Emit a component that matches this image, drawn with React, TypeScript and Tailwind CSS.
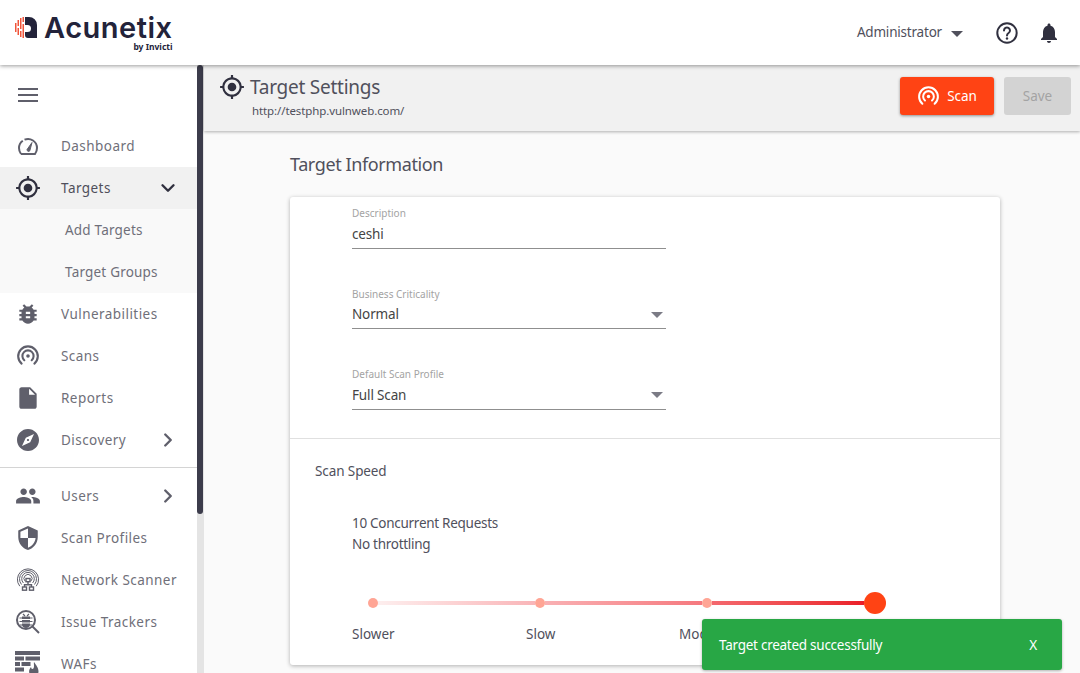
import React from "react";
import { ChevronDown, ChevronRight } from "lucide-react";

const P = ({ d, size = 26, className = "" }: { d: string; size?: number; className?: string }) => (
  <svg width={size} height={size} viewBox="0 0 24 24" fill="currentColor" className={className}><path d={d} /></svg>
);

const TargetIcon = ({ size = 26 }: { size?: number }) => (
  <P size={size} d="M12 8c-2.21 0-4 1.79-4 4s1.79 4 4 4 4-1.79 4-4-1.79-4-4-4zm8.94 3A8.994 8.994 0 0 0 13 3.06V1h-2v2.06A8.994 8.994 0 0 0 3.06 11H1v2h2.06A8.994 8.994 0 0 0 11 20.94V23h2v-2.06A8.994 8.994 0 0 0 20.94 13H23v-2h-2.06zM12 19c-3.87 0-7-3.13-7-7s3.13-7 7-7 7 3.13 7 7-3.13 7-7 7z" />
);

const ScanIcon = ({ size = 24 }: { size?: number }) => (
  <svg width={size} height={size} viewBox="0 0 24 24" fill="none" stroke="currentColor" strokeWidth="2.1" strokeLinecap="round">
    <circle cx="12" cy="12" r="1.8" fill="currentColor" stroke="none" />
    <path d="M8.3 16.2a5.6 5.6 0 1 1 7.4 0" />
    <path d="M5.6 19.6a9.8 9.8 0 1 1 12.8 0" />
  </svg>
);

const icons: Record<string, React.ReactNode> = {
  Dashboard: (
    <svg width="24" height="24" viewBox="0 0 24 24" fill="none" stroke="currentColor" strokeWidth="2">
      <path d="M5 20h14c1.200-1.600 2-3.600 2-6a9 9 0 0 0-12.500-8.300M5 20c-1.200-1.600-2-3.600-2-6 0-3 1.500-5.700 3.800-7.300" />
      <path d="M11 15.600 16 8.500l-2.200 8.300a1.600 1.600 0 0 1-2.800-1.200z" fill="currentColor" strokeWidth="1" />
    </svg>
  ),
  Targets: <TargetIcon />,
  Vulnerabilities: <P d="M20 8h-2.810c-.45-.78-1.070-1.450-1.820-1.960L17 4.410 15.590 3l-2.170 2.170C12.960 5.060 12.490 5 12 5c-.49 0-.96.06-1.410.17L8.410 3 7 4.410l1.620 1.630C7.880 6.550 7.260 7.220 6.810 8H4v2h2.090c-.05.33-.09.66-.09 1v1H4v2h2v1c0 .34.04.67.09 1H4v2h2.810c1.040 1.790 2.970 3 5.190 3s4.150-1.210 5.190-3H20v-2h-2.090c.05-.33.09-.66.09-1v-1h2v-2h-2v-1c0-.34-.04-.67-.09-1H20V8zm-6 8h-4v-2h4v2zm0-4h-4v-2h4v2z" />,
  Scans: <ScanIcon size={24} />,
  Reports: <P d="M14 2H6c-1.100 0-2 .9-2 2v16c0 1.100.9 2 2 2h12c1.100 0 2-.9 2-2V8l-6-6zm-1 7V3.500L18.500 9H13z" />,
  Discovery: <P size={24} d="M12 10.900c-.61 0-1.100.49-1.100 1.100s.49 1.100 1.100 1.100c.61 0 1.100-.49 1.100-1.100s-.49-1.100-1.100-1.100zM12 1C5.930 1 1 5.930 1 12s4.930 11 11 11 11-4.930 11-11S18.070 1 12 1zm2.190 13.190L6 18l3.810-8.190L18 6l-3.810 8.190z" />,
  Users: <P d="M16 11c1.660 0 2.990-1.340 2.990-3S17.660 5 16 5c-1.660 0-3 1.340-3 3s1.340 3 3 3zm-8 0c1.660 0 2.990-1.340 2.990-3S9.660 5 8 5C6.340 5 5 6.340 5 8s1.340 3 3 3zm0 2c-2.330 0-7 1.170-7 3.500V19h14v-2.500c0-2.330-4.670-3.500-7-3.500zm8 0c-.29 0-.62.02-.97.05 1.160.84 1.970 1.970 1.970 3.450V19h6v-2.500c0-2.330-4.670-3.500-7-3.500z" />,
  "Scan Profiles": <P d="M12 1 3 5v6c0 5.550 3.840 10.740 9 12 5.160-1.260 9-6.450 9-12V5l-9-4zm0 10.990h7c-.53 4.120-3.280 7.790-7 8.940V12H5V6.300l7-3.110v8.800z" />,
  "Network Scanner": (
    <svg width="24" height="24" viewBox="0 0 24 24" fill="none" stroke="currentColor" strokeWidth="1">
      <path d="M3.800 18.200a10.600 10.600 0 1 1 16.400 0M5.500 16.500a8.500 8.500 0 1 1 13 0M7.400 15a6.300 6.300 0 1 1 9.200 0M9.200 13.300a4 4 0 1 1 5.600 0" />
      <rect x="10" y="10.500" width="4" height="3.200" strokeWidth="1.400" fill="#fff" />
      <rect x="6.500" y="19" width="4" height="3.200" strokeWidth="1.400" />
      <rect x="13.500" y="19" width="4" height="3.200" strokeWidth="1.400" />
      <path d="M12 13.700v3M8.500 19v-2.300h7V19" strokeWidth="1.400" />
    </svg>
  ),
  "Issue Trackers": (
    <svg width="26" height="26" viewBox="0 0 26 26" fill="none" stroke="currentColor">
      <circle cx="11" cy="11" r="9" strokeWidth="2" />
      <path d="m17.500 17.500 6.500 6.500" strokeWidth="2" />
      <path d="M7 7.500h8v7.500a4 4 0 0 1-8 0z" fill="currentColor" stroke="none" />
      <path d="M4.500 9h4M13.500 9h4M4.500 12.500h13M5 16h12M8 5l2 2M14 5l-2 2" strokeWidth="1.200" />
      <path d="M7 10.500h8M7 14h8" stroke="#fff" strokeWidth="1" />
    </svg>
  ),
  WAFs: (
    <svg width="26" height="26" viewBox="0 0 26 26" fill="currentColor">
      <path d="M0 0h25v4H0zM0 5.500h9v4H0zM10.500 5.500h14.500v4H10.500zM0 11h5v4H0zM6.500 11h9v4h-9zM0 16.500h9v4H0zM0 22h7v4H0z" />
      <path d="M19 11c2 3 4.500 5.500 4.500 9.500a4.700 4.700 0 0 1-9.400 0c0-2 1-3.500 2-4.500 0 1 .5 2 1.400 2 .8 0 1.500-1 1.500-3 0-1.500-.3-2.800 0-4z" />
    </svg>
  ),
};

const font = "font-['Noto_Sans',sans-serif]";

const Item = ({ label, chevron, active }: { label: string; chevron?: "down" | "right"; active?: boolean }) => (
  <div className={`flex h-[42px] shrink-0 items-center ${active ? "bg-[#f1f1f1]" : ""}`}>
    <div className={`flex w-[61px] shrink-0 justify-center pr-[5px] ${active ? "text-[#30303f]" : "text-[#5f5f6b]"}`}>{icons[label]}</div>
    <span className={`flex-1 text-[13.5px] tracking-[0.45px] ${active ? "text-[#4f4f5b]" : "text-[#6f6f79]"}`}>{label}</span>
    {chevron === "down" && <ChevronDown size={22} strokeWidth={2.6} className="mr-[18px] text-[#30303f]" />}
    {chevron === "right" && <ChevronRight size={22} strokeWidth={2.6} className="mr-[18px] text-[#5f5f6b]" />}
  </div>
);

const Sub = ({ label }: { label: string }) => (
  <div className="flex h-[42px] shrink-0 items-center bg-[#f9f9f9] pl-[65px] text-[13.5px] tracking-[0.2px] text-[#6f6f79]">{label}</div>
);

const Field = ({ label, value, select, tall }: { label: string; value: string; select?: boolean; tall?: boolean }) => (
  <div className="w-[314px]">
    <div className="text-[10px] leading-[14px] text-[#a3a3a3]">{label}</div>
    <div className={`flex ${tall ? "h-[29px]" : "h-[28px]"} items-center justify-between border-b border-[#8f8f8f] text-[13.5px] tracking-[-0.15px] text-[#444]`}>
      <span>{value}</span>
      {select && <span className="mr-[3px] h-0 w-0 border-x-[6px] border-t-[6px] border-x-transparent border-t-[#7b7b85]" />}
    </div>
  </div>
);

const Dot = () => <span className="h-[10px] w-[10px] shrink-0 rounded-full bg-[#ffa595]" />;

export default function App() {
  return (
    <div className={`${font} relative flex h-[673px] w-[1080px] flex-col overflow-hidden bg-[#fafafa]`}>
      <header className="relative z-20 flex h-[65px] shrink-0 items-center bg-white pl-[15px] pr-[19px] shadow-[0_1px_4px_rgba(0,0,0,0.4)]">
        <svg width="22" height="22" viewBox="0 0 22 22" className="mb-[9px] shrink-0">
          <path d="M0 6h1.500v9H0zM2.500 3h1.500v6H2.500zM2.500 11h1.500v7H2.500zM5 1h1.500v11H5zM5 14h1.500v6H5zM7.500 0h1.500v5H7.500zM7.500 7h1.500v14H7.500z" fill="#f0553a" />
          <path d="M10 0h4a8 8 0 0 1 8 8v13H13a3 3 0 0 1-3-3v-3h2.500a3.500 3.500 0 0 0 0-7H10z" fill="#23233a" />
        </svg>
        <div className="ml-[7px] flex flex-col">
          <span className="text-[29px] leading-[28px] font-semibold tracking-[0.5px] text-[#23233a] font-['Inter',sans-serif]">Acunetix</span>
          <span className="self-end text-[8.5px] leading-[9px] font-bold text-[#23233a]">by Invicti</span>
        </div>
        <div className="flex-1" />
        <span className="text-[13.5px] tracking-[-0.2px] text-[#50505c]">Administrator</span>
        <span className="ml-[9px] mr-[32px] mt-[2px] h-0 w-0 border-x-[6px] border-t-[6px] border-x-transparent border-t-[#50505c]" />
        <svg width="24" height="24" viewBox="0 0 24 24" fill="none" stroke="#30303f" strokeWidth="2" className="mr-[18px]">
          <circle cx="12" cy="12" r="9.700" />
          <path d="M9 9.500a3 3 0 1 1 4.600 2.500c-1 .7-1.600 1.200-1.600 2.500" strokeLinecap="round" />
          <circle cx="12" cy="17.500" r="1.200" fill="#30303f" stroke="none" />
        </svg>
        <P size={24} className="text-[#30303f]" d="M12 22c1.100 0 2-.9 2-2h-4c0 1.100.89 2 2 2zm6-6v-5c0-3.070-1.640-5.640-4.500-6.320V4c0-.83-.67-1.500-1.500-1.500s-1.500.67-1.500 1.500v.68C7.630 5.360 6 7.920 6 11v5l-2 2v1h16v-1l-2-2z" />
      </header>

      <div className="flex min-h-0 flex-1">
        <aside className="relative flex w-[204px] shrink-0 overflow-hidden">
          <div className="flex w-[197px] shrink-0 flex-col bg-white">
            <div className="flex h-[60px] shrink-0 items-center pl-[16px] text-[#5f5f6b]">
              <svg width="24" height="24" viewBox="0 0 24 24" fill="none" stroke="currentColor" strokeWidth="2"><path d="M2 6h20M2 12h20M2 18h20" /></svg>
            </div>
            <Item label="Dashboard" />
            <Item label="Targets" chevron="down" active />
            <Sub label="Add Targets" />
            <Sub label="Target Groups" />
            <Item label="Vulnerabilities" />
            <Item label="Scans" />
            <Item label="Reports" />
            <Item label="Discovery" chevron="right" />
            <div className="mb-[7px] mt-[6px] h-px shrink-0 bg-[#d4d4d4]" />
            <Item label="Users" chevron="right" />
            <Item label="Scan Profiles" />
            <Item label="Network Scanner" />
            <Item label="Issue Trackers" />
            <Item label="WAFs" />
          </div>
          <div className="w-[7px] shrink-0 bg-[#e4e4e4]">
            <div className="h-[449px] w-[6px] rounded-[3px] bg-[#3c3c4b]" />
          </div>
        </aside>

        <main className="relative flex min-w-0 flex-1 flex-col">
          <div className="flex h-[66px] shrink-0 items-start justify-between bg-[#f1f1f1] pl-[15px] pr-[9px] shadow-[0_1px_3px_rgba(0,0,0,0.3)]">
            <div>
              <div className="mt-[9px] flex items-center text-[#30303f]">
                <TargetIcon size={26} />
                <span className="ml-[5px] text-[19px] leading-[26px] tracking-[-0.25px] text-[#50505c]">Target Settings</span>
              </div>
              <div className="ml-[33px] mt-[3px] text-[11.5px] leading-[16px] tracking-[-0.1px] text-[#50505c]">http://testphp.vulnweb.com/</div>
            </div>
            <div className="mt-[12px] flex gap-[10px]">
              <div className="flex h-[38px] w-[94px] items-center justify-center gap-[7px] rounded-[3px] bg-[#ff4314] text-[13.5px] tracking-[-0.1px] text-white shadow-[0_1px_3px_rgba(0,0,0,0.4)]">
                <ScanIcon size={23} />
                <span>Scan</span>
              </div>
              <div className="flex h-[38px] w-[67px] items-center justify-center rounded-[3px] bg-[#d3d3d3] text-[13.5px] text-[#a3a3a3]">Save</div>
            </div>
          </div>

          <div className="pl-[86px]">
            <h1 className="mt-[20px] text-[18px] leading-[26px] font-normal tracking-[-0.4px] text-[#50505c]">Target Information</h1>
            <section className="mt-[20px] h-[468px] w-[710px] rounded-[3px] bg-white shadow-[0_1px_4px_rgba(0,0,0,0.3)]">
              <div className="flex h-[242px] flex-col gap-[38px] border-b border-[#e0e0e0] pl-[62px] pt-[9px]">
                <Field label="Description" value="ceshi" tall />
                <Field label="Business Criticality" value="Normal" select />
                <Field label="Default Scan Profile" value="Full Scan" select tall />
              </div>
              <div className="pl-[25px] pt-[22px] text-[13.5px] leading-[20px] tracking-[-0.1px] text-[#50505c]">Scan Speed</div>
              <div className="pl-[62px] pt-[32px] text-[13.5px] leading-[21px] tracking-[-0.28px] text-[#50505c]">
                <div>10 Concurrent Requests</div>
                <div>No throttling</div>
              </div>
              <div className="ml-[78px] mt-[37px] flex w-[518px] items-center">
                <Dot />
                <div className="h-[4px] w-[157px] bg-gradient-to-r from-[#fdeeee] to-[#f9b5b8]" />
                <Dot />
                <div className="h-[4px] w-[157px] bg-gradient-to-r from-[#f9b0b3] to-[#f5787e]" />
                <Dot />
                <div className="h-[4px] flex-1 bg-gradient-to-r from-[#f4686e] to-[#ea1c27]" />
                <span className="h-[22px] w-[22px] shrink-0 rounded-full bg-[#ff4314]" />
              </div>
              <div className="ml-[62px] mt-[10px] flex text-[13.5px] text-[#50505c]">
                <span className="w-[174px]">Slower</span>
                <span className="w-[153px]">Slow</span>
                <span>Moderate</span>
              </div>
            </section>
          </div>
        </main>
      </div>

      <div className="absolute left-[702px] top-[619px] z-30 flex h-[51px] w-[360px] items-center justify-between rounded-[3px] bg-[#28a745] pl-[17px] pr-[25px] pt-px text-[13.5px] tracking-[-0.26px] text-white shadow-[0_1px_3px_rgba(0,0,0,0.3)]">
        <span>Target created successfully</span>
        <span>X</span>
      </div>
    </div>
  );
}
